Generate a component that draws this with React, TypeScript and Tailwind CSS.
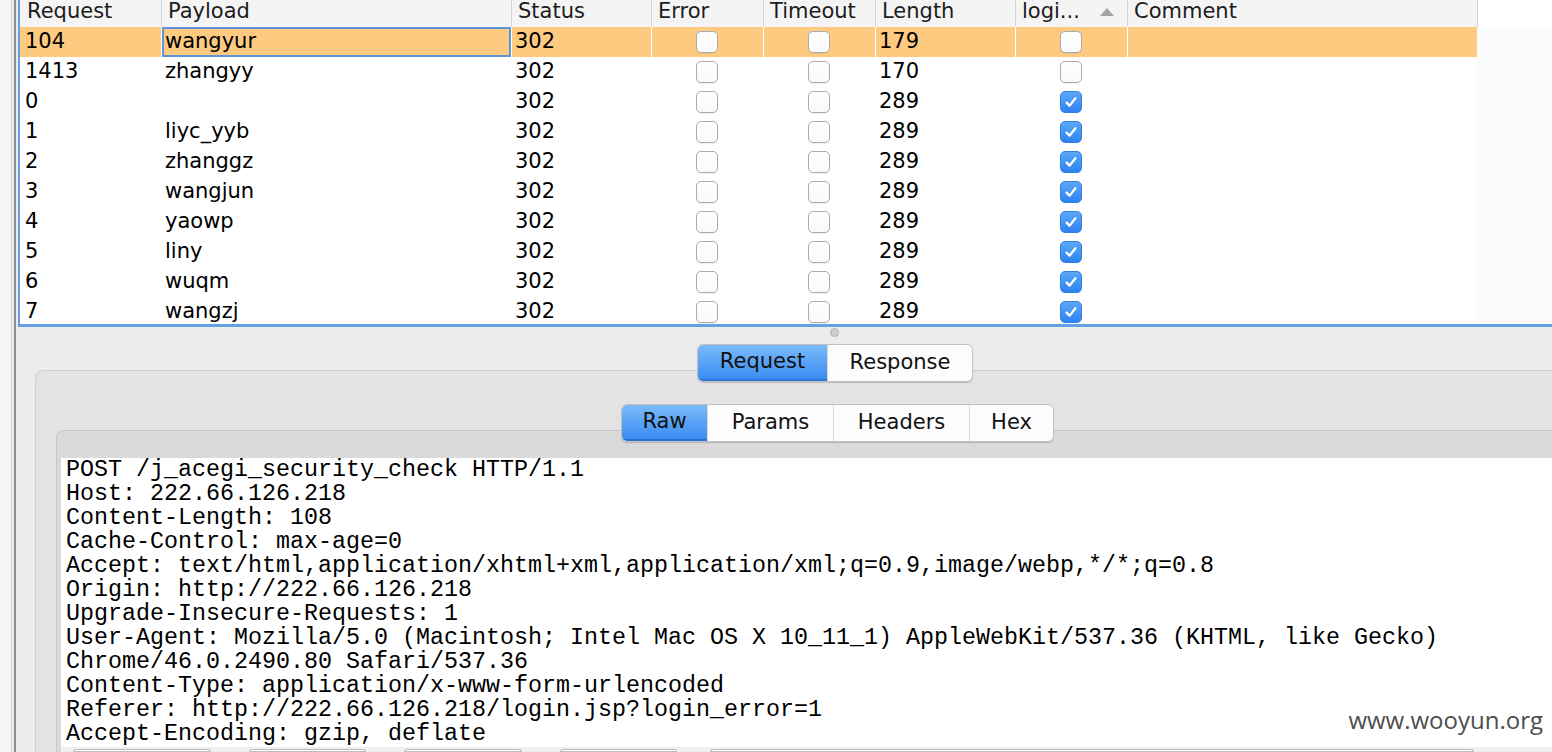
import React from 'react';

type Row = { id: string; payload: string; length: string; login: boolean };

const COLS = 'grid grid-cols-[141px_350px_140px_112px_112px_140px_112px_350px]';

const HEADERS = ['Request', 'Payload', 'Status', 'Error', 'Timeout', 'Length', 'logi...', 'Comment'];

const ROWS: Row[] = [
  { id: '104', payload: 'wangyur', length: '179', login: false },
  { id: '1413', payload: 'zhangyy', length: '170', login: false },
  { id: '0', payload: '', length: '289', login: true },
  { id: '1', payload: 'liyc_yyb', length: '289', login: true },
  { id: '2', payload: 'zhanggz', length: '289', login: true },
  { id: '3', payload: 'wangjun', length: '289', login: true },
  { id: '4', payload: 'yaowp', length: '289', login: true },
  { id: '5', payload: 'liny', length: '289', login: true },
  { id: '6', payload: 'wuqm', length: '289', login: true },
  { id: '7', payload: 'wangzj', length: '289', login: true },
];

const REQUEST_LINES = [
  'POST /j_acegi_security_check HTTP/1.1',
  'Host: 222.66.126.218',
  'Content-Length: 108',
  'Cache-Control: max-age=0',
  'Accept: text/html,application/xhtml+xml,application/xml;q=0.9,image/webp,*/*;q=0.8',
  'Origin: http://222.66.126.218',
  'Upgrade-Insecure-Requests: 1',
  'User-Agent: Mozilla/5.0 (Macintosh; Intel Mac OS X 10_11_1) AppleWebKit/537.36 (KHTML, like Gecko)',
  'Chrome/46.0.2490.80 Safari/537.36',
  'Content-Type: application/x-www-form-urlencoded',
  'Referer: http://222.66.126.218/login.jsp?login_error=1',
  'Accept-Encoding: gzip, deflate',
];

const Checkbox: React.FC<{ checked: boolean }> = ({ checked }) =>
  checked ? (
    <span className="flex h-[22px] w-[22px] items-center justify-center rounded-[5px] border border-[#2f7fe6] bg-linear-to-b from-[#5ba7f8] to-[#2d84ef]">
      <svg width="14" height="14" viewBox="0 0 14 14">
        <path d="M2.6 7.6 L5.6 10.6 L11.4 3.2" stroke="white" strokeWidth="2.3" fill="none" strokeLinecap="round" strokeLinejoin="round" />
      </svg>
    </span>
  ) : (
    <span className="block h-[22px] w-[22px] rounded-[5px] border border-[#ababab] bg-linear-to-b from-white to-[#fafafa] shadow-[0_1px_0_rgba(0,0,0,0.06)]" />
  );

type Seg = { label: string; w: string; active?: boolean };

const Segmented: React.FC<{ items: Seg[] }> = ({ items }) => (
  <div className="flex h-[38px] overflow-hidden rounded-[6px] border border-[#c2c2c2] bg-[#fdfdfd] shadow-[0_1px_1px_rgba(0,0,0,0.18)]">
    {items.map((it, i) => (
      <div
        key={it.label}
        className={`flex items-center justify-center text-[21px] text-[#111] ${it.w} ${
          it.active
            ? 'bg-linear-to-b from-[#79baf9] to-[#3a8cf1] border-b-2 border-[#2a74d6]'
            : i > 0
            ? 'border-l border-[#d8d8d8]'
            : ''
        }`}
      >
        {it.label}
      </div>
    ))}
  </div>
);

const App: React.FC = () => {
  return (
    <div className="relative flex h-[752px] w-[1552px] overflow-hidden bg-[#ececec] font-['DejaVu_Sans',sans-serif] text-black">
      {/* window edge */}
      <div className="w-[11px] bg-[#f6f6f6]" />
      <div className="w-px bg-[#cfcfcf]" />
      <div className="w-[2px] bg-[#eeeeee]" />
      <div className="w-[2px] bg-[#8f8f8f]" />

      <div className="flex min-w-0 flex-1 flex-col">
        {/* results table */}
        <div className="ml-[2px] h-[327px] overflow-hidden border-b-[3px] border-l-2 border-[#64a0e4] bg-[#fbfbfb]">
          <div className="flex h-[27px]">
            <div className={`${COLS} bg-[#f4f4f4] border-r border-[#d4d4d4]`}>
              {HEADERS.map((h, i) => (
                <div
                  key={h}
                  className={`flex items-start justify-between text-[21px] leading-[22px] text-[#1c1c1c] ${
                    i === 0 ? 'pl-[7px]' : 'border-l border-[#d4d4d4] pl-[6px]'
                  } ${i === 6 ? 'pr-[12px]' : ''}`}
                >
                  <span>{h}</span>
                  {i === 6 && (
                    <svg width="16" height="10" viewBox="0 0 16 10" className="mt-[7px]">
                      <path d="M1 9 L8 1 L15 9 Z" fill="#a3a3a3" />
                    </svg>
                  )}
                </div>
              ))}
            </div>
            <div className="flex-1 bg-white" />
          </div>

          {ROWS.map((r, idx) => {
            const sel = idx === 0;
            const cell = `flex h-[30px] items-center border-l pl-[3px] ${sel ? 'border-white bg-[#fdca80]' : 'border-transparent bg-white'}`;
            const box = `flex h-[30px] items-center justify-center border-l pr-[2px] ${sel ? 'border-white bg-[#fdca80]' : 'border-transparent bg-white'}`;
            return (
              <div key={r.id} className={`${COLS} text-[21px] text-black`}>
                <div className={`flex h-[30px] items-center pl-[5px] ${sel ? 'bg-[#fdca80]' : 'bg-white'}`}>{r.id}</div>
                <div className={`${cell} ${sel ? 'shadow-[inset_0_0_0_2px_#5f93d9]' : ''}`}>{r.payload}</div>
                <div className={cell}>302</div>
                <div className={box}>
                  <Checkbox checked={false} />
                </div>
                <div className={box}>
                  <Checkbox checked={false} />
                </div>
                <div className={cell}>{r.length}</div>
                <div className={box}>
                  <Checkbox checked={r.login} />
                </div>
                <div className={cell} />
              </div>
            );
          })}
        </div>

        {/* request / response viewer */}
        <div className="relative flex min-h-0 flex-1 flex-col">
          <div className="h-[17px] pl-[814px] pt-px">
            <span className="block h-[9px] w-[9px] rounded-full border border-[#b3b3b3] bg-[#cdcdcd]" />
          </div>

          <div className="relative z-10 ml-[681px] w-fit">
            <Segmented
              items={[
                { label: 'Request', w: 'w-[129px]', active: true },
                { label: 'Response', w: 'w-[145px]' },
              ]}
            />
          </div>

          <div className="-mt-[12px] ml-[19px] flex flex-1 flex-col rounded-tl-[8px] border-l border-t border-[#cfcfcf] bg-[#e3e3e3] pt-[33px]">
            <div className="relative z-10 ml-[585px] w-fit">
              <Segmented
                items={[
                  { label: 'Raw', w: 'w-[85px]', active: true },
                  { label: 'Params', w: 'w-[126px]' },
                  { label: 'Headers', w: 'w-[136px]' },
                  { label: 'Hex', w: 'w-[84px]' },
                ]}
              />
            </div>

            <div className="-mt-[12px] ml-[20px] flex flex-1 flex-col rounded-tl-[8px] border-l border-t border-[#c7c7c7] bg-[#dadada] pl-[4px] pt-[27px]">
              <div className="h-[289px] overflow-hidden bg-white pl-[5px] font-['Liberation_Mono',monospace] text-[23.33px] leading-[24px] whitespace-pre text-black">
                {REQUEST_LINES.map((l) => (
                  <div key={l}>{l}</div>
                ))}
              </div>
              <div className="flex flex-1 gap-[33px] bg-[#efefef] pl-[12px] pt-[2px]">
                <div className="w-[138px] rounded-t-[5px] border border-[#bdbdbd] bg-white" />
                <div className="ml-[5px] w-[117px] rounded-t-[5px] border border-[#bdbdbd] bg-white" />
                <div className="ml-[5px] w-[118px] rounded-t-[5px] border border-[#bdbdbd] bg-white" />
                <div className="ml-[5px] w-[117px] rounded-t-[5px] border border-[#bdbdbd] bg-white" />
                <div className="w-[764px] rounded-t-[3px] border border-[#bdbdbd] bg-white" />
              </div>
            </div>
          </div>
        </div>
      </div>

      <div className="absolute right-[9px] top-[704px] font-['Open_Sans',sans-serif] text-[24px] leading-[32px] text-[#4d4d4d]">
        www.wooyun.org
      </div>
    </div>
  );
};

export default App;
